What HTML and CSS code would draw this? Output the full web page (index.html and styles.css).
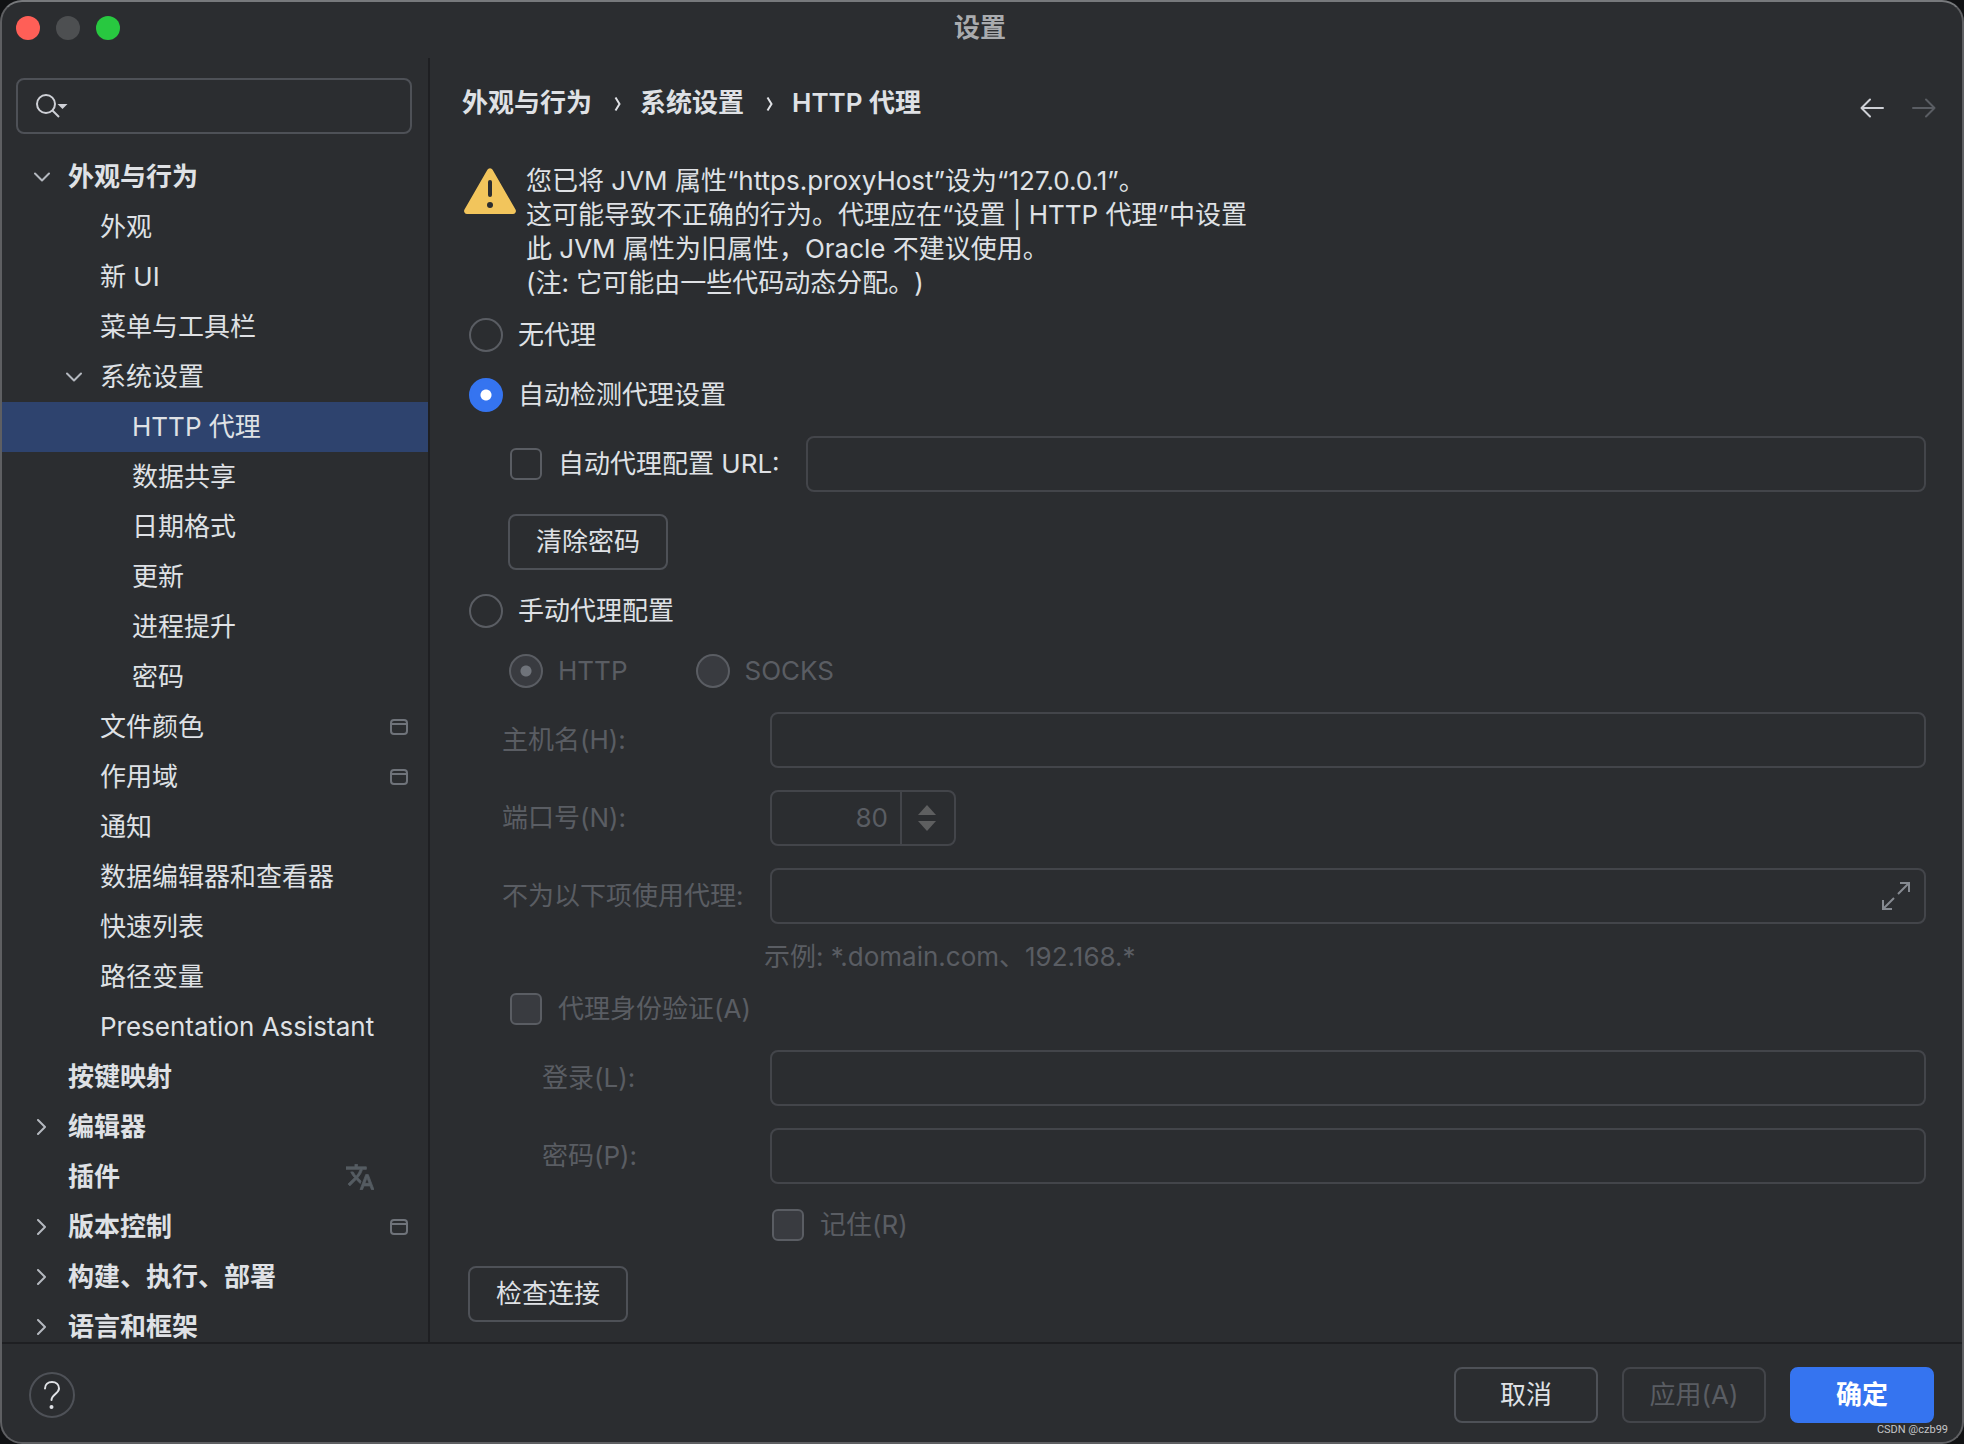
FILE: index.html
```html
<!DOCTYPE html>
<html lang="zh-CN">
<head>
<meta charset="utf-8">
<title>设置</title>
<link rel="stylesheet" href="styles.css">
</head>
<body>
<svg class="sprite" aria-hidden="true">
  <symbol id="chev-down" viewBox="0 0 16 16"><path d="M1 4.500 8 11.500 15 4.500" fill="none" stroke="currentColor" stroke-width="2" stroke-linecap="round" stroke-linejoin="round"/></symbol>
  <symbol id="chev-right" viewBox="0 0 16 16"><path d="M4 1 11 8 4 15" fill="none" stroke="currentColor" stroke-width="2" stroke-linecap="round" stroke-linejoin="round"/></symbol>
  <symbol id="project" viewBox="0 0 18 16"><rect x="1" y="1" width="16" height="14" rx="3" fill="none" stroke="currentColor" stroke-width="2"/><path d="M1 5H17" stroke="currentColor" stroke-width="2"/></symbol>
  <symbol id="crumb" viewBox="0 0 8 16"><path d="M1.500 2.500 5.500 9 1.500 15.500" fill="none" stroke="currentColor" stroke-width="2"/></symbol>
</svg>
<div class="window">
  <header class="titlebar">
    <div class="lights">
      <button class="light light-close" aria-label="关闭"></button>
      <button class="light light-min" aria-label="最小化" disabled></button>
      <button class="light light-zoom" aria-label="缩放"></button>
    </div>
    <h1 class="title">设置</h1>
  </header>

  <div class="body">
    <nav class="sidebar">
      <label class="search">
        <svg class="search-icon" width="34" height="26" viewBox="0 0 34 26"><circle cx="11" cy="11" r="9" fill="none" stroke="#ced0d6" stroke-width="2"/><path d="M17.500 17.500 24 24" stroke="#ced0d6" stroke-width="2"/><path d="M22.500 11H32.500L27.500 16Z" fill="#ced0d6"/></svg>
        <input class="search-input" type="text" aria-label="搜索设置">
      </label>
      <ul class="tree">
        <li><a class="row group" href="#"><svg class="chev"><use href="#chev-down"/></svg>外观与行为</a>
          <ul>
            <li><a class="row l1" href="#">外观</a></li>
            <li><a class="row l1" href="#">新 UI</a></li>
            <li><a class="row l1" href="#">菜单与工具栏</a></li>
            <li><a class="row l1" href="#"><svg class="chev"><use href="#chev-down"/></svg>系统设置</a>
              <ul>
                <li><a class="row l2 selected" href="#" aria-current="page">HTTP 代理</a></li>
                <li><a class="row l2" href="#">数据共享</a></li>
                <li><a class="row l2" href="#">日期格式</a></li>
                <li><a class="row l2" href="#">更新</a></li>
                <li><a class="row l2" href="#">进程提升</a></li>
                <li><a class="row l2" href="#">密码</a></li>
              </ul>
            </li>
            <li><a class="row l1" href="#">文件颜色<svg class="badge"><use href="#project"/></svg></a></li>
            <li><a class="row l1" href="#">作用域<svg class="badge"><use href="#project"/></svg></a></li>
            <li><a class="row l1" href="#">通知</a></li>
            <li><a class="row l1" href="#">数据编辑器和查看器</a></li>
            <li><a class="row l1" href="#">快速列表</a></li>
            <li><a class="row l1" href="#">路径变量</a></li>
            <li><a class="row l1" href="#">Presentation Assistant</a></li>
          </ul>
        </li>
        <li><a class="row group" href="#">按键映射</a></li>
        <li><a class="row group" href="#"><svg class="chev"><use href="#chev-right"/></svg>编辑器</a></li>
        <li><a class="row group" href="#">插件<svg class="translate" viewBox="1 2 22 20"><path fill="currentColor" stroke="currentColor" stroke-width=".6" d="M12.870 15.070l-2.540-2.510.03-.03A17.520 17.520 0 0 0 14.070 6H17V4h-7V2H8v2H1v1.990h11.170C11.500 7.920 10.440 9.750 9 11.350 8.070 10.320 7.300 9.190 6.690 8h-2c.73 1.630 1.730 3.170 2.980 4.560l-5.090 5.020L4 19l5-5 3.110 3.110.76-2.040zM18.500 10h-2L12 22h2l1.120-3h4.750L21 22h2l-4.500-12zm-2.620 7l1.620-4.330L19.120 17h-3.240z"/></svg></a></li>
        <li><a class="row group" href="#"><svg class="chev"><use href="#chev-right"/></svg>版本控制<svg class="badge"><use href="#project"/></svg></a></li>
        <li><a class="row group" href="#"><svg class="chev"><use href="#chev-right"/></svg>构建、执行、部署</a></li>
        <li><a class="row group" href="#"><svg class="chev"><use href="#chev-right"/></svg>语言和框架</a></li>
      </ul>
    </nav>

    <main class="content">
      <div class="head">
        <div class="crumbs">
          <a href="#">外观与行为</a><svg class="sep"><use href="#crumb"/></svg><a href="#">系统设置</a><svg class="sep"><use href="#crumb"/></svg><span>HTTP 代理</span>
        </div>
        <div class="history">
          <button class="nav" aria-label="后退"><svg width="24" height="20" viewBox="0 0 24 20"><path d="M23 10H1.500M10 1.500 1.500 10 10 18.500" fill="none" stroke="currentColor" stroke-width="2" stroke-linecap="round" stroke-linejoin="round"/></svg></button>
          <button class="nav" aria-label="前进" disabled><svg width="24" height="20" viewBox="0 0 24 20"><path d="M1 10H22.500M14 1.500 22.500 10 14 18.500" fill="none" stroke="currentColor" stroke-width="2" stroke-linecap="round" stroke-linejoin="round"/></svg></button>
        </div>
      </div>

      <div class="warning">
        <svg class="warn-icon" width="52" height="46" viewBox="0 0 52 46"><path d="M23.400 1.700a3 3 0 0 1 5.200 0L51.500 41.500a3 3 0 0 1-2.600 4.500H3.100A3 3 0 0 1 .5 41.500Z" fill="#f2c55c"/><rect x="24" y="12" width="4" height="17" rx="2" fill="#2b2d30"/><circle cx="26" cy="37" r="3" fill="#2b2d30"/></svg>
        <p class="warn-text">您已将 JVM 属性“https.proxyHost”设为“127.0.0.1”。<br>这可能导致不正确的行为。代理应在“设置 | HTTP 代理”中设置<br>此 JVM 属性为旧属性，Oracle 不建议使用。<br>(注: 它可能由一些代码动态分配。)</p>
      </div>

      <form class="form">
        <div class="option"><label class="choice"><input type="radio" name="mode">无代理</label></div>
        <div class="option"><label class="choice"><input type="radio" name="mode" checked>自动检测代理设置</label></div>
        <div class="field in1">
          <label class="choice pac"><input type="checkbox">自动代理配置 URL:</label>
          <input class="text" type="text" aria-label="自动代理配置 URL" disabled>
        </div>
        <div class="field in1"><button class="btn" type="button">清除密码</button></div>
        <div class="option"><label class="choice"><input type="radio" name="mode">手动代理配置</label></div>
        <div class="option in1 types">
          <label class="choice off"><input type="radio" name="type" checked disabled>HTTP</label>
          <label class="choice off"><input type="radio" name="type" disabled>SOCKS</label>
        </div>
        <div class="field"><label class="name" for="host">主机名(H):</label><input class="text" id="host" type="text" disabled></div>
        <div class="field"><label class="name" for="port">端口号(N):</label>
          <div class="spinner">
            <input class="num" id="port" type="text" inputmode="numeric" value="80" disabled>
            <div class="steps">
              <button class="step" type="button" aria-label="增加" disabled><svg width="18" height="10" viewBox="0 0 18 10"><path d="M9 0 18 10H0Z" fill="currentColor"/></svg></button>
              <button class="step" type="button" aria-label="减少" disabled><svg width="18" height="10" viewBox="0 0 18 10"><path d="M0 0H18L9 10Z" fill="currentColor"/></svg></button>
            </div>
          </div>
        </div>
        <div class="field"><label class="name" for="except">不为以下项使用代理:</label>
          <div class="expandable">
            <input class="bare" id="except" type="text" disabled>
            <button class="expand" type="button" aria-label="展开"><svg width="28" height="28" viewBox="0 0 28 28"><path d="M18 1H27V10M27 1 16 12M1 18V27H10M1 27 12 16" fill="none" stroke="currentColor" stroke-width="2"/></svg></button>
          </div>
        </div>
        <p class="hint">示例: *.domain.com、192.168.*</p>
        <div class="option in1"><label class="choice off"><input type="checkbox" disabled>代理身份验证(A)</label></div>
        <div class="field"><label class="name deep" for="login">登录(L):</label><input class="text" id="login" type="text" disabled></div>
        <div class="field"><label class="name deep" for="pass">密码(P):</label><input class="text" id="pass" type="password" disabled></div>
        <div class="option remember"><label class="choice off"><input type="checkbox" disabled>记住(R)</label></div>
        <div class="field check"><button class="btn" type="button">检查连接</button></div>
      </form>
    </main>
  </div>

  <footer class="footer">
    <button class="help" aria-label="帮助"><svg width="18" height="30" viewBox="0 0 18 30"><path d="M2 8.500C2 4.500 5 2 9 2s7 2.600 7 6.500c0 5-7.500 6-7.500 11.500" fill="none" stroke="#dfe1e5" stroke-width="2" stroke-linecap="round"/><circle cx="8.500" cy="27" r="2" fill="#dfe1e5"/></svg></button>
    <div class="actions">
      <button class="btn action">取消</button>
      <button class="btn action" disabled>应用(A)</button>
      <button class="btn action primary">确定</button>
    </div>
  </footer>
  <span class="watermark">CSDN @czb99</span>
</div>
</body>
</html>
```
FILE: styles.css
```css
:root {
  --bg: #2b2d30;
  --text: #dfe1e5;
  --muted: #5a5d63;
  --line: #1e1f22;
  --border: #4e5157;
  --border-off: #43454a;
  --blue: #3574f0;
}

* { box-sizing: border-box; }

body {
  margin: 0;
  background: #111214;
  color: var(--text);
  font: 26px/34px Inter, "Noto Sans CJK SC", sans-serif;
  font-optical-sizing: none;
  text-spacing-trim: space-all;
}

button, input { font: inherit; color: inherit; }
button { padding: 0; border: 0; background: none; }
a { color: inherit; text-decoration: none; }
ul { margin: 0; padding: 0; list-style: none; }
p { margin: 0; }
svg { flex: none; }
.sprite { position: absolute; width: 0; height: 0; }

.window {
  position: relative;
  display: flex;
  flex-direction: column;
  height: 100vh;
  overflow: hidden;
  border: 2px solid #5e5f62;
  border-top-color: #77797c;
  border-radius: 22px;
  background: var(--bg);
}

/* title bar */
.titlebar {
  display: grid;
  grid-template-columns: 1fr auto 1fr;
  align-items: center;
  height: 56px;
  padding: 0 18px 4px 14px;
}
.lights { display: flex; gap: 16px; }
.light { width: 24px; height: 24px; border-radius: 50%; }
.light-close { background: #ff5f57; }
.light-min { background: #4d4f51; }
.light-zoom { background: #28c840; }
.title { margin: 0; font-size: 26px; line-height: 34px; font-weight: 600; color: #a9abae; }

.body { display: flex; flex: 1; min-height: 0; }

/* sidebar */
.sidebar {
  display: flex;
  flex-direction: column;
  flex: none;
  width: 428px;
  overflow: hidden;
  border-right: 2px solid var(--line);
}
.search {
  display: flex;
  flex: none;
  align-items: center;
  gap: 8px;
  height: 56px;
  margin: 20px 16px 18px 14px;
  padding: 0 17px;
  border: 2px solid var(--border);
  border-radius: 8px;
}
.search-input { flex: 1; min-width: 0; border: 0; outline: 0; background: none; }
.row {
  display: flex;
  align-items: center;
  height: 50px;
  padding: 0 20px 0 66px;
}
.group { font-weight: 600; }
.l1 { padding-left: 98px; }
.l2 { padding-left: 130px; }
.selected { background: #2e436e; }
.chev { width: 16px; height: 16px; margin: 0 18px 0 -34px; color: #b4b8bf; }
.badge { width: 18px; height: 16px; margin-left: auto; color: #6f737a; }
.translate { width: 28px; height: 26px; margin: 0 34px 0 auto; color: #555c62; }

/* settings page */
.content { flex: 1; min-width: 0; padding: 28px 0 0 32px; }
.head {
  display: flex;
  justify-content: space-between;
  align-items: flex-end;
  padding-right: 22px;
}
.crumbs { display: flex; align-items: center; padding-bottom: 4px; font-weight: 600; }
.sep { width: 8px; height: 18px; margin: 0 18px 0 22px; }
.history { display: flex; gap: 20px; }
.nav { display: grid; place-items: center; width: 32px; height: 32px; color: #ced0d6; }
.nav:disabled { color: var(--muted); }

.warning { display: flex; gap: 10px; margin: 40px 0 5px; padding-left: 2px; }
.warn-icon { margin-top: 4px; }

.form { padding-right: 36px; }
.option { display: flex; align-items: center; height: 60px; padding-left: 7px; }
.field { display: flex; align-items: center; height: 78px; padding-left: 40px; }
.option.in1 { padding-left: 47px; }
.field.in1 { padding-left: 46px; }
.types { gap: 68px; }
.choice { display: flex; align-items: center; gap: 15px; white-space: nowrap; }
.pac { margin-right: 26px; }
.off, .name, .hint { color: var(--muted); }
.name { flex: none; width: 268px; }
.deep { padding-left: 40px; }
.hint { padding: 5px 0 5px 302px; }
.option.remember { padding-left: 309px; }
.field.check { padding-left: 6px; }

.choice input {
  flex: none;
  appearance: none;
  width: 34px;
  height: 34px;
  margin: 0;
  border: 2px solid var(--muted);
  border-radius: 50%;
}
.choice input[type="checkbox"] { width: 32px; height: 32px; margin: 0 1px; border-radius: 6px; }
.field .choice input[type="checkbox"] { margin-left: 2px; }
.choice input:disabled { background-color: #393b40; }
.choice input[type="radio"]:checked {
  border-color: var(--blue);
  background: radial-gradient(circle, #fff 5px, var(--blue) 6px) border-box;
}
.choice input[type="radio"]:checked:disabled {
  border-color: var(--muted);
  background: radial-gradient(circle, #6f737a 5px, #393b40 6px);
}

.text, .expandable, .spinner {
  height: 56px;
  border: 2px solid var(--border-off);
  border-radius: 8px;
  background: none;
}
.text { flex: 1; min-width: 0; padding: 0 14px; }
.expandable { display: flex; flex: 1; align-items: center; padding-right: 14px; }
.bare { flex: 1; min-width: 0; padding: 0 14px; border: 0; background: none; }
.expand { display: flex; color: #868a91; }
.spinner { display: flex; width: 186px; }
.num {
  flex: 1;
  min-width: 0;
  padding: 0 12px;
  border: 0;
  background: none;
  color: var(--muted);
  text-align: right;
}
.steps {
  display: flex;
  flex-direction: column;
  justify-content: center;
  align-items: center;
  gap: 6px;
  width: 54px;
  padding-right: 2px;
  border-left: 2px solid var(--border-off);
}
.step { display: flex; color: #5e5f60; }

.btn {
  width: 160px;
  height: 56px;
  border: 2px solid var(--border);
  border-radius: 8px;
}
.btn:disabled { border-color: var(--border-off); color: var(--muted); }

/* footer */
.footer {
  display: flex;
  flex: none;
  justify-content: space-between;
  align-items: center;
  height: 100px;
  padding: 4px 28px 0 27px;
  border-top: 2px solid var(--line);
}
.help {
  display: grid;
  place-items: center;
  width: 46px;
  height: 46px;
  border: 2px solid var(--border);
  border-radius: 50%;
}
.actions { display: flex; gap: 24px; }
.action { width: 144px; }
.primary { border-color: var(--blue); background: var(--blue); color: #fff; font-weight: 600; }

.watermark {
  position: absolute;
  right: 14px;
  bottom: 5px;
  font: 11px/14px Roboto, sans-serif;
  color: #c4c5c7;
}
```
